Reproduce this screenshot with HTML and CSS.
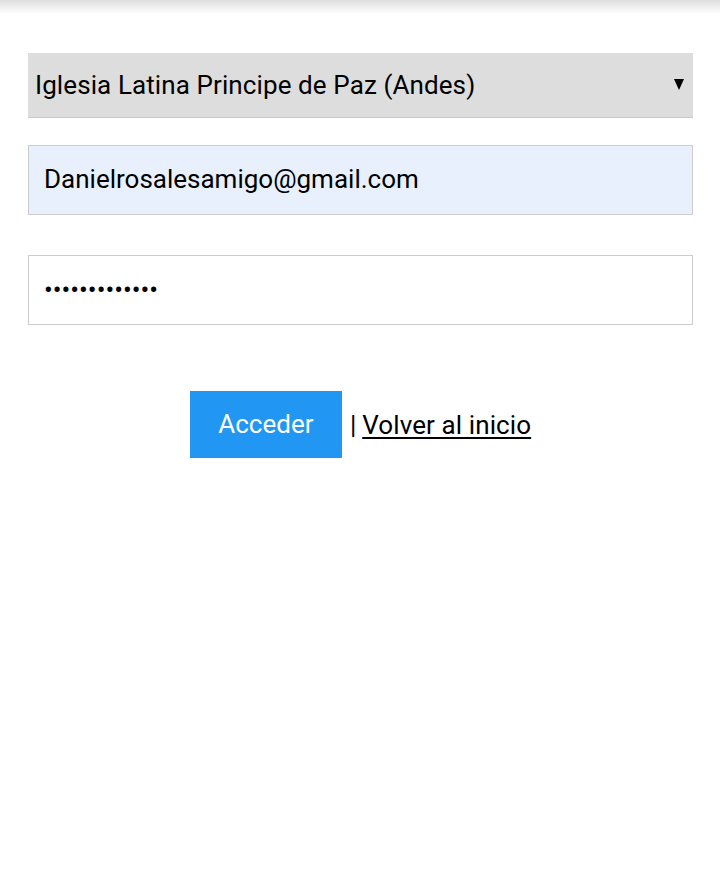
FILE: index.html
```html
<!DOCTYPE html>
<html lang="es">
<head>
<meta charset="utf-8">
<link rel="stylesheet" href="styles.css">
</head>
<body>
<div class="topshadow"></div>
<form class="login">
  <div class="select">
    <span class="select-text">Iglesia Latina Principe de Paz (Andes)</span>
    <svg class="select-arrow" width="10" height="11" viewBox="0 0 10 11"><polygon points="0,0 10,0 5,11" fill="#000"/></svg>
  </div>
  <div class="field email">Danielrosalesamigo@gmail.com</div>
  <div class="field password">•••••••••••••</div>
  <div class="actions">
    <span class="btn">Acceder</span>
    <span class="sep">|</span>
    <a class="back" href="#">Volver al inicio</a>
  </div>
</form>
</body>
</html>
```
FILE: styles.css
```css
html, body {
  margin: 0;
  padding: 0;
  background: #ffffff;
  font-family: Roboto, "Noto Sans", sans-serif;
  color: #000;
}
body {
  width: 720px;
  height: 877px;
  overflow: hidden;
  position: relative;
}
.topshadow {
  position: absolute;
  top: 0;
  left: 0;
  right: 0;
  height: 14px;
  background: linear-gradient(to bottom, rgba(0,0,0,0.13), rgba(0,0,0,0));
}
.login {
  padding: 53px 27px 0 28px;
  display: flex;
  flex-direction: column;
}
.select {
  height: 64px;
  background: #dddddd;
  border-bottom: 1px solid #c8c8c8;
  display: flex;
  align-items: center;
  justify-content: space-between;
  padding: 0 9px 0 7px;
  font-size: 26px;
}
.select-text {
  letter-spacing: 0.1px;
}
.select-arrow {
  display: block;
  margin-top: -1px;
}
.field {
  height: 68px;
  border: 1px solid #cccccc;
  display: flex;
  align-items: center;
  padding: 0 15px;
  font-size: 26px;
}
.email {
  margin-top: 27px;
  background: #e8f0fe;
  padding-bottom: 2px;
  height: 66px;
}
.password {
  margin-top: 40px;
  background: #fff;
}
.actions {
  margin-top: 66px;
  display: flex;
  align-items: center;
  justify-content: center;
  font-size: 26px;
  padding-right: 0;
}
.btn {
  background: #2196f3;
  color: #fff;
  width: 152px;
  height: 67px;
  display: flex;
  align-items: center;
  justify-content: center;
  font-size: 26px;
  padding-bottom: 2px;
  box-sizing: border-box;
}
.sep {
  margin-left: 8px;
  margin-right: 6px;
}
.back {
  color: #000;
  text-decoration: underline;
  text-underline-offset: 3px;
  letter-spacing: 0.1px;
}
```
